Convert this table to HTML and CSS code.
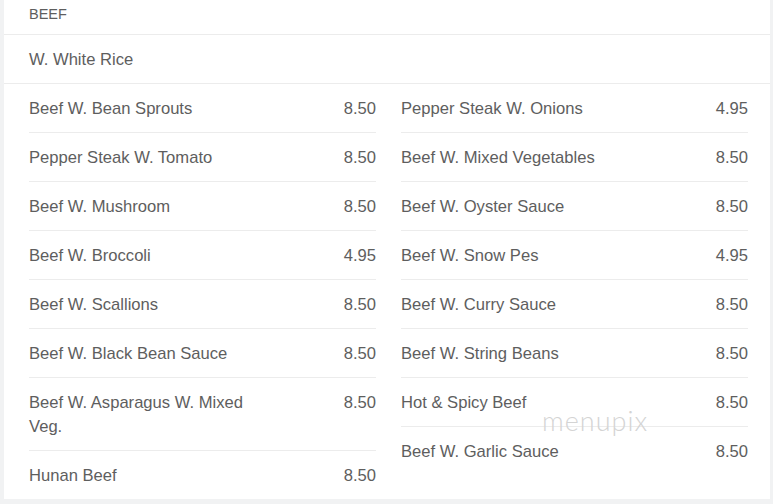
FILE: index.html
```html
<!DOCTYPE html>
<html lang="en">
<head>
  <meta charset="UTF-8">
  <title>Beef - Menu</title>
  <link rel="stylesheet" href="styles.css">
</head>
<body>
  <div class="card">
    <div class="cat-title">BEEF</div>
    <div class="cat-note">W. White Rice</div>
    <div class="cols">
      <div class="col">
        <div class="item"><span class="name">Beef W. Bean Sprouts</span><span class="price">8.50</span></div>
        <div class="item"><span class="name">Pepper Steak W. Tomato</span><span class="price">8.50</span></div>
        <div class="item"><span class="name">Beef W. Mushroom</span><span class="price">8.50</span></div>
        <div class="item"><span class="name">Beef W. Broccoli</span><span class="price">4.95</span></div>
        <div class="item"><span class="name">Beef W. Scallions</span><span class="price">8.50</span></div>
        <div class="item"><span class="name">Beef W. Black Bean Sauce</span><span class="price">8.50</span></div>
        <div class="item"><span class="name">Beef W. Asparagus W. Mixed Veg.</span><span class="price">8.50</span></div>
        <div class="item"><span class="name">Hunan Beef</span><span class="price">8.50</span></div>
      </div>
      <div class="col">
        <div class="item"><span class="name">Pepper Steak W. Onions</span><span class="price">4.95</span></div>
        <div class="item"><span class="name">Beef W. Mixed Vegetables</span><span class="price">8.50</span></div>
        <div class="item"><span class="name">Beef W. Oyster Sauce</span><span class="price">8.50</span></div>
        <div class="item"><span class="name">Beef W. Snow Pes</span><span class="price">4.95</span></div>
        <div class="item"><span class="name">Beef W. Curry Sauce</span><span class="price">8.50</span></div>
        <div class="item"><span class="name">Beef W. String Beans</span><span class="price">8.50</span></div>
        <div class="item"><span class="name">Hot &amp; Spicy Beef</span><span class="price">8.50</span></div>
        <div class="item"><span class="name">Beef W. Garlic Sauce</span><span class="price">8.50</span></div>
      </div>
    </div>
    <div class="watermark">menupix</div>
  </div>
</body>
</html>
```

FILE: styles.css
```css
body { margin: 0; background: #f1f2f3; font-family: "Liberation Sans", Arial, sans-serif; color: #5e5e5e; }
.card { position: relative; margin: 0 3px 5px 4px; background: #fff; }

.cat-title { padding: 4px 25px 10px; font-size: 14.5px; line-height: 20px; border-bottom: 1px solid #ececec; }
.cat-note { padding: 13px 25px 11px; font-size: 16.6px; line-height: 24px; border-bottom: 1px solid #ececec; }

.cols { display: grid; grid-template-columns: 347px 347px; column-gap: 25px; padding: 0 22px 0 25px; }
.item { display: flex; justify-content: space-between; align-items: flex-start; padding: 13px 0 11px; font-size: 16.6px; line-height: 24px; border-bottom: 1px solid #ececec; }
.item:last-child { border-bottom: none; }
.name { width: 70%; }
.price { text-align: right; }

/* watermark over the list */
.watermark { position: absolute; left: 538px; top: 404px; font-family: Lato, "Open Sans", sans-serif; font-weight: 300; font-size: 27px; color: #d4d4d4; letter-spacing: 1px; }
```
